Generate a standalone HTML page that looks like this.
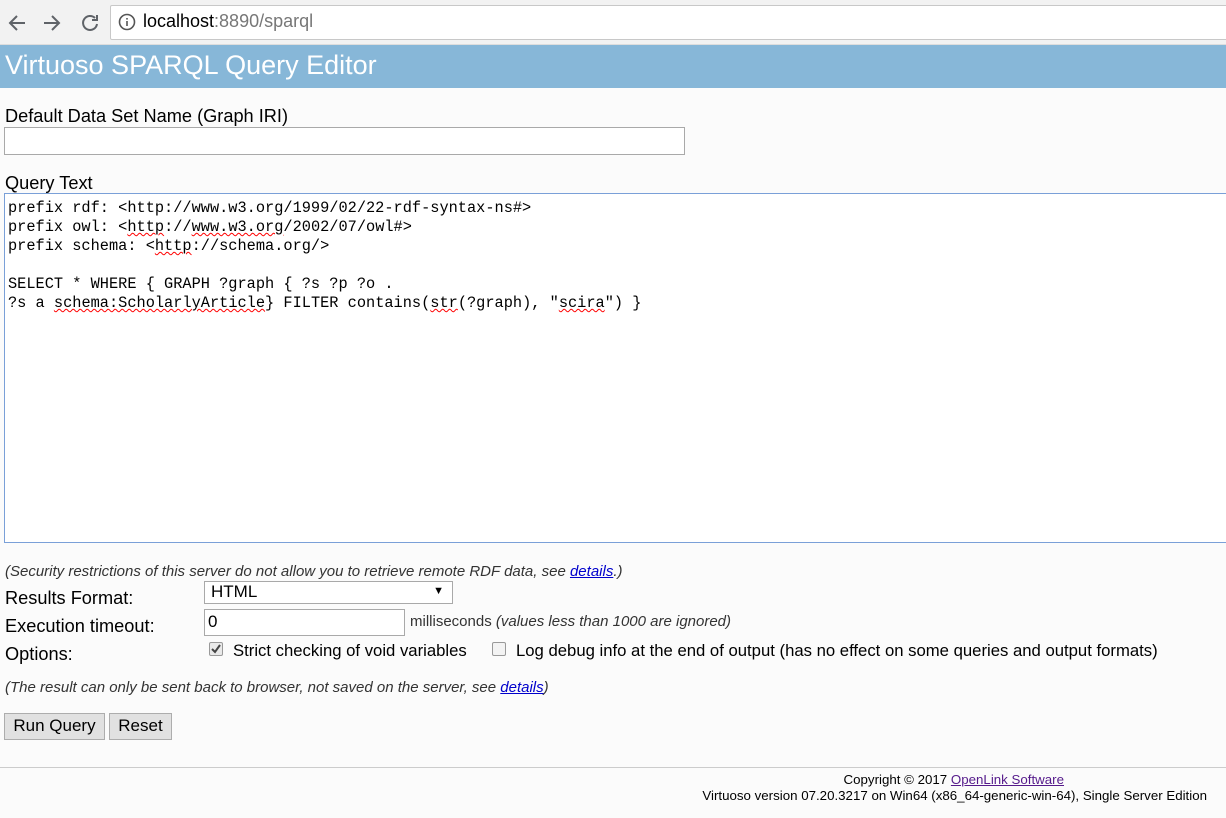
<!DOCTYPE html>
<html><head><style>
body{margin:0;width:1226px;height:818px;background:#fbfbfb;font-family:"Liberation Sans",Arial,sans-serif;position:relative;overflow:hidden;color:#000}
.a{position:absolute;white-space:nowrap}
.chrome{position:absolute;left:0;top:0;width:1226px;height:44px;background:#f2f2f2;border-bottom:1px solid #ddd}
.url{position:absolute;left:110px;top:5px;width:1120px;height:33px;background:#fff;border:1px solid #c8c8c8;border-radius:2px}
.hdr{position:absolute;left:0;top:45px;width:1226px;height:43px;background:#87b7d8}
.l{font-size:18.2px}
input,.box{position:absolute;box-sizing:border-box;background:#fff;border:1px solid #a9a9a9}
.ta{position:absolute;left:4px;top:193px;width:1226px;height:350px;box-sizing:border-box;border:1px solid #7aa0d8;background:#fff;font-family:"Liberation Mono",monospace;font-size:15.3px;line-height:19px;padding:5px 3px;white-space:pre}
.sq{text-decoration:underline wavy red;text-decoration-thickness:1px}
i{font-size:15px;color:#333}
a{color:#00c}
.btn{position:absolute;top:713px;height:27px;background:#e1e1e1;border:1px solid #adadad;box-sizing:border-box;font-size:17px;line-height:24px;text-align:center}
.cb{position:absolute;width:12px;height:12px;border:1px solid #999;border-radius:2px;background:#e9e9e9}
</style></head><body>
<div class="chrome">
<svg class="a" style="left:7px;top:12px" width="100" height="22" viewBox="0 0 100 22" fill="none" stroke="#5f6368" stroke-width="2"><path d="M18 11H3M10 4l-7 7 7 7"/><path d="M37 11h15M45 4l7 7-7 7"/><path d="M88 6a7 7 0 1 0 2 6"/><path d="M90 3v5h-5" /></svg>
<div class="url"></div>
<svg class="a" style="left:118px;top:13px" width="18" height="18" viewBox="0 0 18 18"><circle cx="9" cy="9" r="7.5" fill="none" stroke="#555" stroke-width="1.6"/><rect x="8.2" y="8" width="1.6" height="5" fill="#555"/><rect x="8.2" y="5" width="1.6" height="1.6" fill="#555"/></svg>
<div class="a" style="left:143px;top:11px;font-size:18px">localhost<span style="color:#777">:8890/sparql</span></div>
</div>
<div class="hdr"></div>
<div class="a" style="left:5px;top:50px;font-size:27px;color:#fff">Virtuoso SPARQL Query Editor</div>
<div class="a l" style="left:5px;top:106px">Default Data Set Name (Graph IRI)</div>
<div class="box" style="left:4px;top:127px;width:681px;height:28px"></div>
<div class="a l" style="left:5px;top:173px">Query Text</div>
<div class="ta">prefix rdf: &lt;http://www.w3.org/1999/02/22-rdf-syntax-ns#&gt;
prefix owl: &lt;<span class="sq">http</span>://<span class="sq">www.w3.org</span>/2002/07/owl#&gt;
prefix schema: &lt;<span class="sq">http</span>://schema.org/&gt;

SELECT * WHERE { GRAPH ?graph { ?s ?p ?o .
?s a <span class="sq">schema:ScholarlyArticle</span>} FILTER contains(<span class="sq">str</span>(?graph), "<span class="sq">scira</span>") }</div>
<div class="a" style="left:5px;top:563px"><i>(Security restrictions of this server do not allow you to retrieve remote RDF data, see <a href="#">details</a>.)</i></div>
<div class="a l" style="left:5px;top:588px">Results Format:</div>
<div class="box" style="left:204px;top:581px;width:249px;height:23px;font-size:17px;padding:0 6px">HTML<span style="position:absolute;right:8px;top:3px;font-size:11px">▼</span></div>
<div class="a l" style="left:5px;top:616px">Execution timeout:</div>
<div class="box" style="left:204px;top:609px;width:201px;height:27px;font-size:17px;padding:2px 3px">0</div>
<div class="a" style="left:410px;top:613px;font-size:15px;color:#333">milliseconds <i>(values less than 1000 are ignored)</i></div>
<div class="a l" style="left:5px;top:644px">Options:</div>
<div class="cb" style="left:209px;top:642px"><svg style="position:absolute;left:1px;top:1px" width="10" height="10"><path d="M1 5l3 3 5-7" stroke="#444" stroke-width="2" fill="none"/></svg></div>
<div class="a" style="left:233px;top:641px;font-size:16.7px">Strict checking of void variables</div>
<div class="cb" style="left:492px;top:642px;background:#f3f3f3"></div>
<div class="a" style="left:516px;top:641px;font-size:16.7px">Log debug info at the end of output (has no effect on some queries and output formats)</div>
<div class="a" style="left:5px;top:679px"><i>(The result can only be sent back to browser, not saved on the server, see <a href="#">details</a>)</i></div>
<div class="btn" style="left:4px;width:101px">Run Query</div>
<div class="btn" style="left:109px;width:63px">Reset</div>
<div class="a" style="left:0;top:767px;width:1226px;border-top:1px solid #ccc"></div>
<div class="a" style="right:162px;top:772px;font-size:13.3px">Copyright © 2017 <a href="#" style="color:#551a8b">OpenLink Software</a></div>
<div class="a" style="right:19px;top:788px;font-size:13.3px">Virtuoso version 07.20.3217 on Win64 (x86_64-generic-win-64), Single Server Edition</div>
</body></html>
